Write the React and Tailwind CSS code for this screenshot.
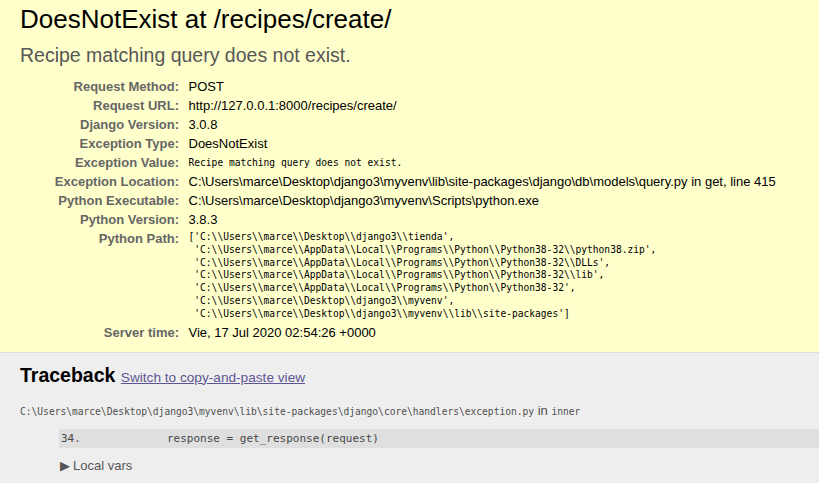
const SANS = 'font-["Liberation_Sans",Arial,sans-serif]';
const MONO = 'font-["DejaVu_Sans_Mono",monospace]';

const pythonPath = [
  String.raw`['C:\\Users\\marce\\Desktop\\django3\\tienda',`,
  String.raw` 'C:\\Users\\marce\\AppData\\Local\\Programs\\Python\\Python38-32\\python38.zip',`,
  String.raw` 'C:\\Users\\marce\\AppData\\Local\\Programs\\Python\\Python38-32\\DLLs',`,
  String.raw` 'C:\\Users\\marce\\AppData\\Local\\Programs\\Python\\Python38-32\\lib',`,
  String.raw` 'C:\\Users\\marce\\AppData\\Local\\Programs\\Python\\Python38-32',`,
  String.raw` 'C:\\Users\\marce\\Desktop\\django3\\myvenv',`,
  String.raw` 'C:\\Users\\marce\\Desktop\\django3\\myvenv\\lib\\site-packages']`,
];

const meta = [
  ['Request Method:', 'POST'],
  ['Request URL:', 'http://127.0.0.1:8000/recipes/create/'],
  ['Django Version:', '3.0.8'],
  ['Exception Type:', 'DoesNotExist'],
  ['Exception Value:', 'Recipe matching query does not exist.', 'mono'],
  ['Exception Location:', String.raw`C:\Users\marce\Desktop\django3\myvenv\lib\site-packages\django\db\models\query.py in get, line 415`],
  ['Python Executable:', String.raw`C:\Users\marce\Desktop\django3\myvenv\Scripts\python.exe`],
  ['Python Version:', '3.8.3'],
  ['Python Path:', pythonPath, 'path'],
  ['Server time:', 'Vie, 17 Jul 2020 02:54:26 +0000'],
];

function MetaValue({ value, kind }) {
  if (kind === 'mono') {
    return <pre className={`${MONO} text-[9.6px] leading-[15px] whitespace-pre`}>{value}</pre>;
  }
  if (kind === 'path') {
    return (
      <pre className={`${MONO} text-[9.6px] leading-[12.8px] whitespace-pre`}>
        {value.join('\n')}
      </pre>
    );
  }
  return <span>{value}</span>;
}

export default function App() {
  return (
    <div className={`${SANS} min-h-screen bg-[#eee] text-black text-[13px] leading-[15px] overflow-hidden`}>
      {/* summary */}
      <div className="bg-[#ffc] px-[20px] pt-[4px] pb-[10px] border-b border-[#ddd]">
        <h1 className="text-[26px] leading-[30px] font-normal whitespace-nowrap">DoesNotExist at /recipes/create/</h1>
        <pre className={`${SANS} mt-[9px] text-[19.5px] leading-[24px] text-[#575757]`}>
          Recipe matching query does not exist.
        </pre>
        <div className="mt-[10px] grid grid-cols-[165.5px_1fr]">
          {meta.map(([label, value, kind]) => (
            <div key={label} className="contents">
              <div className="pl-[3px] pr-[6.5px] py-[2px] text-right font-bold text-[#666] whitespace-nowrap">
                {label}
              </div>
              <div className="px-[3px] py-[2px] whitespace-nowrap">
                <MetaValue value={value} kind={kind} />
              </div>
            </div>
          ))}
        </div>
      </div>

      {/* traceback */}
      <div className="pl-[20px] pt-[11px] pb-[10px]">
        <h2 className="text-[19.5px] leading-[22px] font-bold mb-[14px] whitespace-nowrap">
          Traceback{' '}
          <span className="text-[13.65px] font-normal">
            <a href="#" className="text-[#5E5694] underline">Switch to copy-and-paste view</a>
          </span>
        </h2>
        <ul className="list-none text-[#4f4f4f]">
          <li>
            <div className="whitespace-nowrap">
              <code className={`${MONO} text-[9.6px]`}>
                {String.raw`C:\Users\marce\Desktop\django3\myvenv\lib\site-packages\django\core\handlers\exception.py`}
              </code>{' '}
              in{' '}
              <code className={`${MONO} text-[9.6px]`}>inner</code>
            </div>
            <div className="py-[10px]">
              <div className={`${MONO} ml-[39px] bg-[#dfdfdf] text-[#464646] text-[11px] leading-[13.5px] py-[3px] pl-[2px] flex whitespace-pre`}>
                <span className="w-[106px]">34.</span>
                <span>response = get_response(request)</span>
              </div>
            </div>
            <div className="ml-[40px] text-[#555] flex items-center gap-[3px]">
              <span className="text-[13px] leading-[15px]">▶</span>
              <span>Local vars</span>
            </div>
          </li>
        </ul>
      </div>
    </div>
  );
}
